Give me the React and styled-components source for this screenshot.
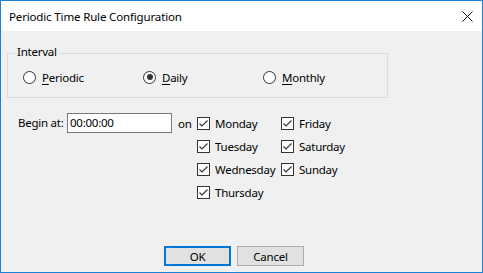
import React from "react";
import styled, { createGlobalStyle } from "styled-components";

const Global = createGlobalStyle`
  html, body { margin: 0; padding: 0; background: #ffffff; }
  * { box-sizing: border-box; }
`;

const FONT = `"Segoe UI", "Noto Sans", "Open Sans", sans-serif`;

const Window = styled.div`
  width: 483px;
  height: 273px;
  border: 1px solid #1883d7;
  display: flex;
  flex-direction: column;
  font-family: ${FONT};
  font-size: 11.5px;
  letter-spacing: -0.25px;
  color: #000;
  overflow: hidden;
`;

const TitleBar = styled.div`
  height: 30px;
  background: #ffffff;
  display: flex;
  align-items: center;
  justify-content: space-between;
  padding: 0 9px 0 8px;
  flex: none;
`;

const Title = styled.span`
  font-size: 11.5px;
  letter-spacing: -0.15px;
  padding-top: 1px;
`;

const Client = styled.div`
  flex: 1;
  background: #f0f0f0;
  display: flex;
  flex-direction: column;
  padding: 22px 0 6px 6px;
`;

const GroupBox = styled.div`
  position: relative;
  width: 381px;
  height: 45px;
  border: 1px solid #dcdcdc;
  padding: 15px 0 0 15px;
  display: flex;
`;

const Legend = styled.span`
  position: absolute;
  top: -10px;
  left: 7px;
  padding: 0 2px;
  background: #f0f0f0;
  line-height: 16px;
`;

const RadioItem = styled.label`
  width: 120px;
  height: 16px;
  display: flex;
  align-items: center;
  gap: 6px;
`;

const RadioCircle = styled.span`
  width: 13px;
  height: 13px;
  border-radius: 50%;
  border: 1px solid #333333;
  background: #ffffff;
  display: flex;
  align-items: center;
  justify-content: center;
  flex: none;
  &::after {
    content: "";
    width: 6px;
    height: 6px;
    border-radius: 50%;
    background: ${(p) => (p.$checked ? "#333333" : "transparent")};
  }
`;

const U = styled.span`
  text-decoration: underline;
  text-underline-offset: 2px;
`;

const Schedule = styled.div`
  display: flex;
  align-items: flex-start;
  margin-top: 15px;
  padding-left: 11px;
`;

const BeginLabel = styled.span`
  width: 49px;
  flex: none;
  height: 20px;
  line-height: 20px;
`;

const TimeInput = styled.div`
  width: 105px;
  flex: none;
  height: 20px;
  border: 1px solid #7a7a7a;
  background: #ffffff;
  padding-left: 2px;
  line-height: 18px;
`;

const OnLabel = styled.span`
  height: 20px;
  line-height: 22px;
  margin-left: 6px;
  width: 19px;
  flex: none;
`;

const DayGrid = styled.div`
  display: grid;
  grid-template-columns: 84px 84px;
  grid-template-rows: repeat(4, 23px);
`;

const DayItem = styled.label`
  display: flex;
  align-items: center;
  height: 20px;
  gap: 5px;
  white-space: nowrap;
  grid-column: ${(p) => p.$col};
  grid-row: ${(p) => p.$row};
`;

const CheckBox = styled.span`
  width: 13px;
  height: 13px;
  border: 1px solid #333333;
  background: #ffffff;
  display: flex;
  align-items: center;
  justify-content: center;
  flex: none;
`;

const ButtonRow = styled.div`
  margin-top: auto;
  display: flex;
  gap: 6px;
  padding-left: 157px;
`;

const Button = styled.button`
  width: 67px;
  height: 20px;
  font-family: ${FONT};
  font-size: 11.5px;
  letter-spacing: -0.2px;
  color: #000;
  background: #e1e1e1;
  border: 1px solid ${(p) => (p.$default ? "#0078d7" : "#adadad")};
  box-shadow: ${(p) => (p.$default ? "inset 0 0 0 1px #0078d7" : "none")};
  padding: 0;
`;

const Check = () => (
  <svg width="11" height="11" viewBox="0 0 11 11">
    <path d="M1.5 5.5 L4 8 L9.5 2.5" fill="none" stroke="#333" strokeWidth="1.1" />
  </svg>
);

const CloseIcon = () => (
  <svg width="11" height="11" viewBox="0 0 11 11">
    <path d="M0.5 0.5 L10.5 10.5 M10.5 0.5 L0.5 10.5" stroke="#111" strokeWidth="1" />
  </svg>
);

const days = [
  { name: "Monday", col: 1, row: 1 },
  { name: "Tuesday", col: 1, row: 2 },
  { name: "Wednesday", col: 1, row: 3 },
  { name: "Thursday", col: 1, row: 4 },
  { name: "Friday", col: 2, row: 1 },
  { name: "Saturday", col: 2, row: 2 },
  { name: "Sunday", col: 2, row: 3 },
];

export default function App() {
  return (
    <>
      <Global />
      <Window>
        <TitleBar>
          <Title>Periodic Time Rule Configuration</Title>
          <CloseIcon />
        </TitleBar>
        <Client>
          <GroupBox>
            <Legend>Interval</Legend>
            <RadioItem>
              <RadioCircle />
              <span><U>P</U>eriodic</span>
            </RadioItem>
            <RadioItem>
              <RadioCircle $checked />
              <span><U>D</U>aily</span>
            </RadioItem>
            <RadioItem>
              <RadioCircle />
              <span><U>M</U>onthly</span>
            </RadioItem>
          </GroupBox>
          <Schedule>
            <BeginLabel>Begin at:</BeginLabel>
            <TimeInput>00:00:00</TimeInput>
            <OnLabel>on</OnLabel>
            <DayGrid>
              {days.map((d) => (
                <DayItem key={d.name} $col={d.col} $row={d.row}>
                  <CheckBox><Check /></CheckBox>
                  <span>{d.name}</span>
                </DayItem>
              ))}
            </DayGrid>
          </Schedule>
          <ButtonRow>
            <Button $default>OK</Button>
            <Button>Cancel</Button>
          </ButtonRow>
        </Client>
      </Window>
    </>
  );
}
